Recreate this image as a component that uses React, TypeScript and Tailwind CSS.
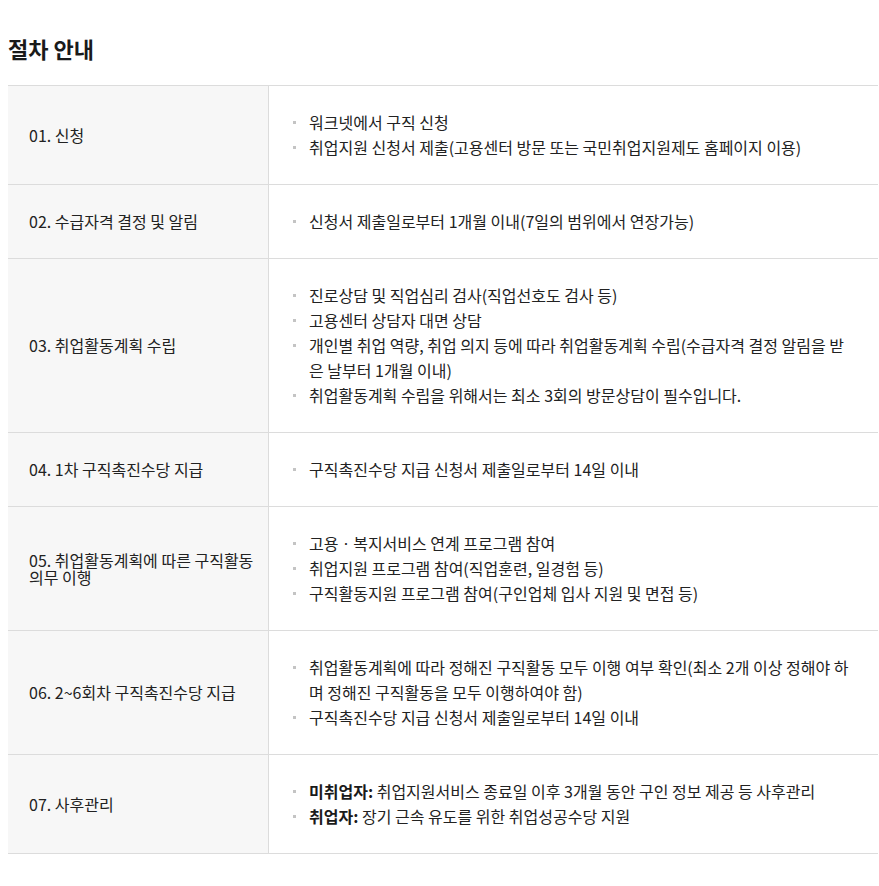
import React from "react";

type Item = { bold?: string; text: string };
type Row = { label: string; items: Item[] };

const rows: Row[] = [
  {
    label: "01. 신청",
    items: [
      { text: "워크넷에서 구직 신청" },
      { text: "취업지원 신청서 제출(고용센터 방문 또는 국민취업지원제도 홈페이지 이용)" },
    ],
  },
  {
    label: "02. 수급자격 결정 및 알림",
    items: [{ text: "신청서 제출일로부터 1개월 이내(7일의 범위에서 연장가능)" }],
  },
  {
    label: "03. 취업활동계획 수립",
    items: [
      { text: "진로상담 및 직업심리 검사(직업선호도 검사 등)" },
      { text: "고용센터 상담자 대면 상담" },
      { text: "개인별 취업 역량, 취업 의지 등에 따라 취업활동계획 수립(수급자격 결정 알림을 받은 날부터 1개월 이내)" },
      { text: "취업활동계획 수립을 위해서는 최소 3회의 방문상담이 필수입니다." },
    ],
  },
  {
    label: "04. 1차 구직촉진수당 지급",
    items: [{ text: "구직촉진수당 지급 신청서 제출일로부터 14일 이내" }],
  },
  {
    label: "05. 취업활동계획에 따른 구직활동 의무 이행",
    items: [
      { text: "고용ㆍ복지서비스 연계 프로그램 참여" },
      { text: "취업지원 프로그램 참여(직업훈련, 일경험 등)" },
      { text: "구직활동지원 프로그램 참여(구인업체 입사 지원 및 면접 등)" },
    ],
  },
  {
    label: "06. 2~6회차 구직촉진수당 지급",
    items: [
      { text: "취업활동계획에 따라 정해진 구직활동 모두 이행 여부 확인(최소 2개 이상 정해야 하며 정해진 구직활동을 모두 이행하여야 함)" },
      { text: "구직촉진수당 지급 신청서 제출일로부터 14일 이내" },
    ],
  },
  {
    label: "07. 사후관리",
    items: [
      { bold: "미취업자:", text: " 취업지원서비스 종료일 이후 3개월 동안 구인 정보 제공 등 사후관리" },
      { bold: "취업자:", text: " 장기 근속 유도를 위한 취업성공수당 지원" },
    ],
  },
];

export default function App() {
  return (
    <div
      className="min-h-[886px] bg-white pl-2 pr-px text-[#222]"
      style={{ fontFamily: '"Noto Sans CJK KR", "Noto Sans", sans-serif' }}
    >
      <h2 className="pt-[33px] text-[22px] font-bold leading-[30px] text-[#1a1a1a] mb-[22px]">절차 안내</h2>
      <div className="border-t border-[#dcdcdc]">
        {rows.map((r, i) => (
          <div key={i} className="grid grid-cols-[261px_1fr] border-b border-[#dcdcdc]">
            <div className="flex items-center bg-[#f7f7f7] border-r border-[#dcdcdc] pl-[21px] pr-[8px] text-[16px] leading-[17px]">
              {r.label}
            </div>
            <ul className="py-[24px] pl-[24px] pr-[20px] text-[16px] leading-[25px]">
              {r.items.map((it, j) => (
                <li key={j} className="flex break-all">
                  <span className="mt-[11px] mr-[13px] h-[3px] w-[3px] shrink-0 bg-[#c4c4c4]" />
                  <span>
                    {it.bold && <b className="font-bold text-[#1a1a1a]">{it.bold}</b>}
                    {it.text}
                  </span>
                </li>
              ))}
            </ul>
          </div>
        ))}
      </div>
    </div>
  );
}
